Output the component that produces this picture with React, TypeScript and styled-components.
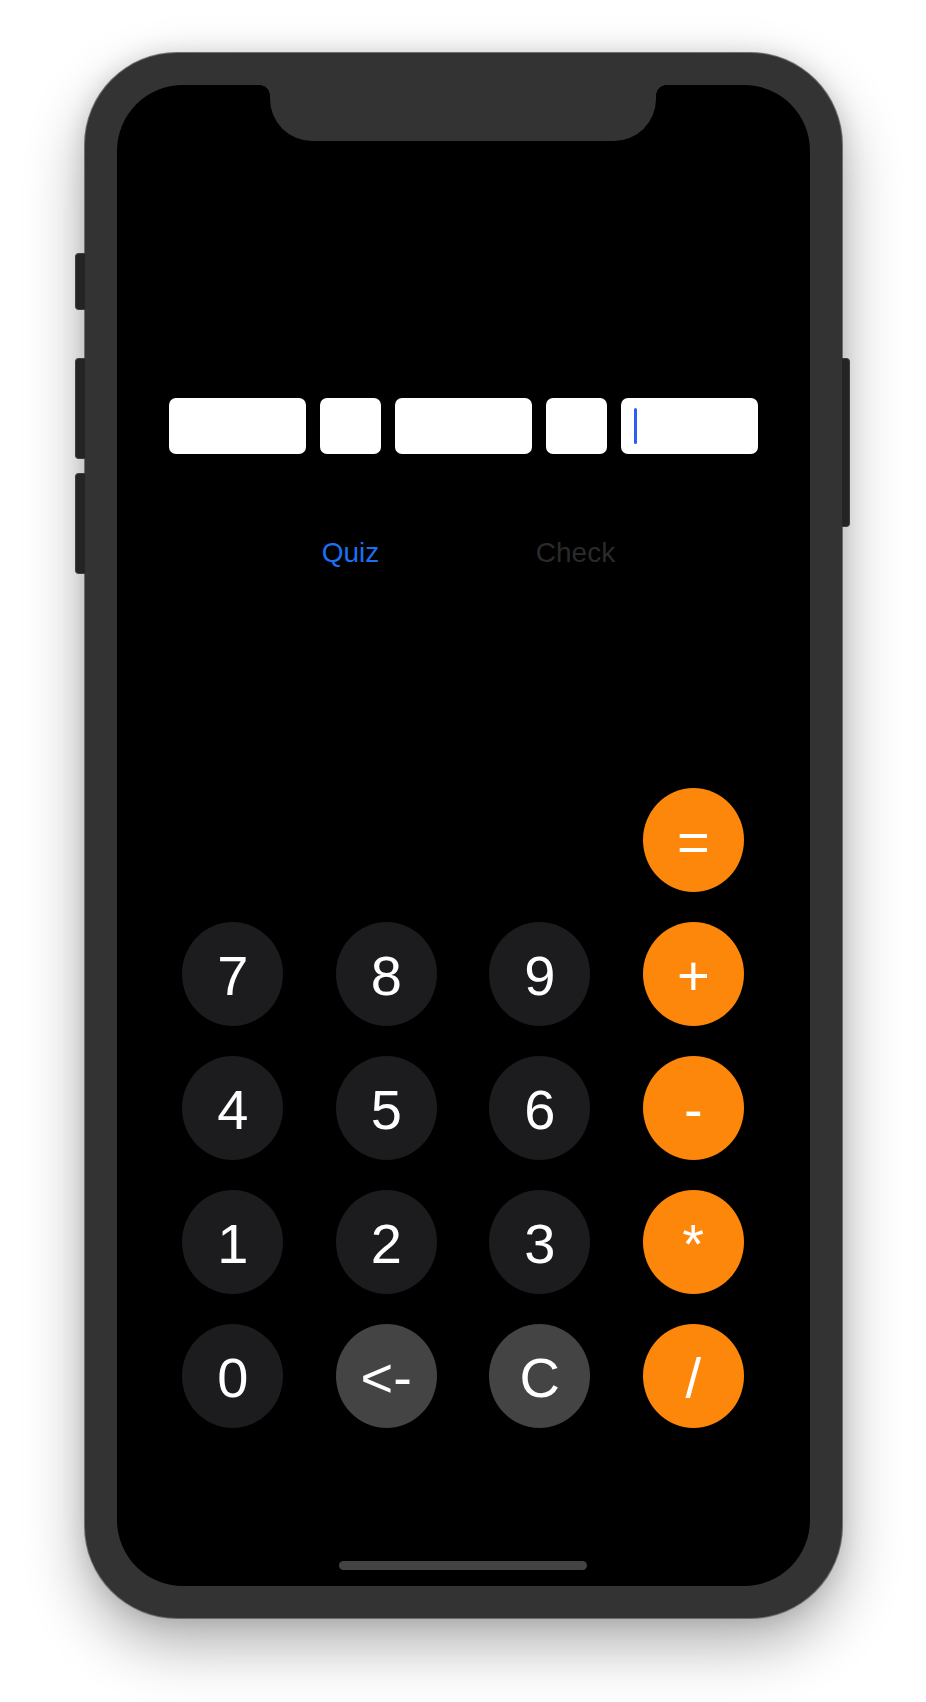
import styled, { createGlobalStyle } from "styled-components";

const GlobalStyle = createGlobalStyle`
    html, body {
        margin: 0;
        padding: 0;
        background: #ffffff;
    }
    body {
        font-family: "Liberation Sans", Arial, sans-serif;
    }
`;

const Page = styled.div`
    width: 926px;
    height: 1702px;
    box-sizing: border-box;
    padding-top: 53px;
    display: flex;
    justify-content: center;
    background: #ffffff;
`;

const Phone = styled.div`
    position: relative;
    width: 757px;
    height: 1565px;
    box-sizing: border-box;
    padding: 32px;
    background: #333333;
    border-radius: 92px;
    box-shadow: 0 0 0 1px #6e6e6e, 0 26px 60px rgba(0, 0, 0, 0.32), 0 0 24px rgba(0, 0, 0, 0.12);
`;

const SideButton = styled.div<{ $side: "left" | "right"; $top: number; $height: number }>`
    position: absolute;
    top: ${props => props.$top}px;
    height: ${props => props.$height}px;
    box-sizing: border-box;
    background: #242424;
    border: 1px solid #3e3e3e;
    ${props => props.$side === "left"
        ? "left: -10px; width: 10px; border-radius: 4px 0 0 4px; border-right: none;"
        : "right: -8px; width: 8px; border-radius: 0 4px 4px 0; border-left: none;"}
`;

const Screen = styled.div`
    position: relative;
    height: 100%;
    box-sizing: border-box;
    padding-top: 313px;
    background: #000000;
    border-radius: 66px;
    overflow: hidden;
    display: flex;
    flex-direction: column;
    align-items: center;
`;

const Notch = styled.div`
    position: absolute;
    top: 0;
    left: 50%;
    transform: translateX(-50%);
    width: 386px;
    height: 56px;
    background: #333333;
    border-radius: 0 0 42px 42px;
    &::before, &::after {
        content: "";
        position: absolute;
        top: 0;
        width: 10px;
        height: 10px;
    }
    &::before {
        left: -10px;
        background: radial-gradient(circle at 0 100%, transparent 9.5px, #333333 10px);
    }
    &::after {
        right: -10px;
        background: radial-gradient(circle at 100% 100%, transparent 9.5px, #333333 10px);
    }
`;

const Fields = styled.div`
    display: flex;
    gap: 14px;
    height: 56px;
`;

const Field = styled.div<{ $wide?: boolean }>`
    width: ${props => props.$wide ? 137 : 61}px;
    box-sizing: border-box;
    padding-left: 13px;
    background: #ffffff;
    border-radius: 7px;
    display: flex;
    align-items: center;
`;

const Caret = styled.span`
    width: 3px;
    height: 36px;
    background: #2f5cf3;
    border-radius: 1.5px;
`;

const Actions = styled.div`
    display: flex;
    gap: 105px;
    margin-top: 82px;
`;

const ActionButton = styled.button<{ $enabled?: boolean }>`
    width: 120px;
    padding: 0;
    border: none;
    background: none;
    font-family: "Liberation Sans", Arial, sans-serif;
    font-size: 28px;
    line-height: 34px;
    color: ${props => props.$enabled ? "#1a70f3" : "#2a2a2a"};
    text-align: center;
`;

const Keypad = styled.div`
    display: grid;
    grid-template-columns: repeat(4, 101px);
    grid-auto-rows: 104px;
    column-gap: 52.5px;
    row-gap: 30px;
    margin-top: 218px;
`;

const keyColors = {
    digit: "#1c1c1e",
    func: "#444444",
    op: "#fd870b",
};

const Key = styled.button<{ $kind: "digit" | "func" | "op"; $col?: number }>`
    grid-column: ${props => props.$col ?? "auto"};
    padding: 3px 0 0;
    border: none;
    border-radius: 50%;
    background: ${props => keyColors[props.$kind]};
    color: #ffffff;
    font-family: "Liberation Sans", Arial, sans-serif;
    font-size: 56px;
    line-height: 1;
    display: flex;
    align-items: center;
    justify-content: center;
`;

const HomeBar = styled.div`
    margin-top: auto;
    margin-bottom: 16px;
    width: 248px;
    height: 9px;
    border-radius: 5px;
    background: #434343;
`;

type KeyDef = { label: string; kind: "digit" | "func" | "op" };

const keys: KeyDef[] = [
    { label: "7", kind: "digit" },
    { label: "8", kind: "digit" },
    { label: "9", kind: "digit" },
    { label: "+", kind: "op" },
    { label: "4", kind: "digit" },
    { label: "5", kind: "digit" },
    { label: "6", kind: "digit" },
    { label: "-", kind: "op" },
    { label: "1", kind: "digit" },
    { label: "2", kind: "digit" },
    { label: "3", kind: "digit" },
    { label: "*", kind: "op" },
    { label: "0", kind: "digit" },
    { label: "<-", kind: "func" },
    { label: "C", kind: "func" },
    { label: "/", kind: "op" },
];

function App() {
    return (
        <Page>
            <GlobalStyle />
            <Phone>
                <SideButton $side="left" $top={200} $height={57} />
                <SideButton $side="left" $top={305} $height={101} />
                <SideButton $side="left" $top={420} $height={101} />
                <SideButton $side="right" $top={305} $height={169} />
                <Screen>
                    <Notch />
                    <Fields>
                        <Field $wide />
                        <Field />
                        <Field $wide />
                        <Field />
                        <Field $wide><Caret /></Field>
                    </Fields>
                    <Actions>
                        <ActionButton $enabled>Quiz</ActionButton>
                        <ActionButton>Check</ActionButton>
                    </Actions>
                    <Keypad>
                        <Key $kind="op" $col={4}>=</Key>
                        {keys.map(k => <Key key={k.label} $kind={k.kind}>{k.label}</Key>)}
                    </Keypad>
                    <HomeBar />
                </Screen>
            </Phone>
        </Page>
    );
}

export default App;
